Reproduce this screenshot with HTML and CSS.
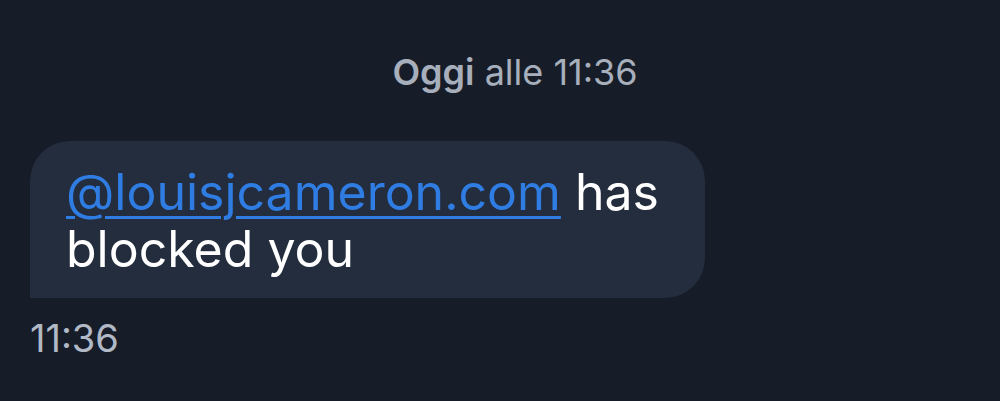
FILE: index.html
```html
<!DOCTYPE html>
<html lang="it">
<head>
    <meta charset="UTF-8">
    <meta name="viewport" content="width=device-width, initial-scale=1.0">
    <title>Chat</title>
    <link rel="stylesheet" href="styles.css">
</head>
<body>
    <div class="chat">
        <div class="day"><b>Oggi</b> alle 11:36</div>
        <div class="msg">
            <div class="bubble">
                <a href="javascript:;">@louisjcameron.com</a> has blocked you
            </div>
            <div class="time">11:36</div>
        </div>
    </div>
</body>
</html>
```

FILE: styles.css
```css
*{
    padding: 0;
    margin: 0;
    box-sizing: border-box;
}
html,body{
    height: 100%;
}
body{
    background-color: #171d28;
    font-family: Inter, "Noto Sans", sans-serif;
    overflow: hidden;
}
.chat{
    padding: 51px 30px 0;
}
.day{
    color: #a7afbc;
    font-size: 36px;
    line-height: 42px;
    text-align: center;
    padding-left: 30px;
}
.day b{
    font-weight: 600;
}
.msg{
    margin-top: 48px;
}
.bubble{
    width: 675px;
    background-color: #232d3e;
    border-radius: 40px 40px 40px 0;
    padding: 23px 30px 20px 36px;
    color: #fff;
    font-size: 50px;
    line-height: 57px;
}
.bubble a{
    color: #2f7de3;
    text-decoration: underline;
    text-underline-offset: 6px;
    text-decoration-thickness: 3px;
}
.time{
    margin-top: 18px;
    color: #b1b9c6;
    font-size: 38px;
    line-height: 44px;
}
```
